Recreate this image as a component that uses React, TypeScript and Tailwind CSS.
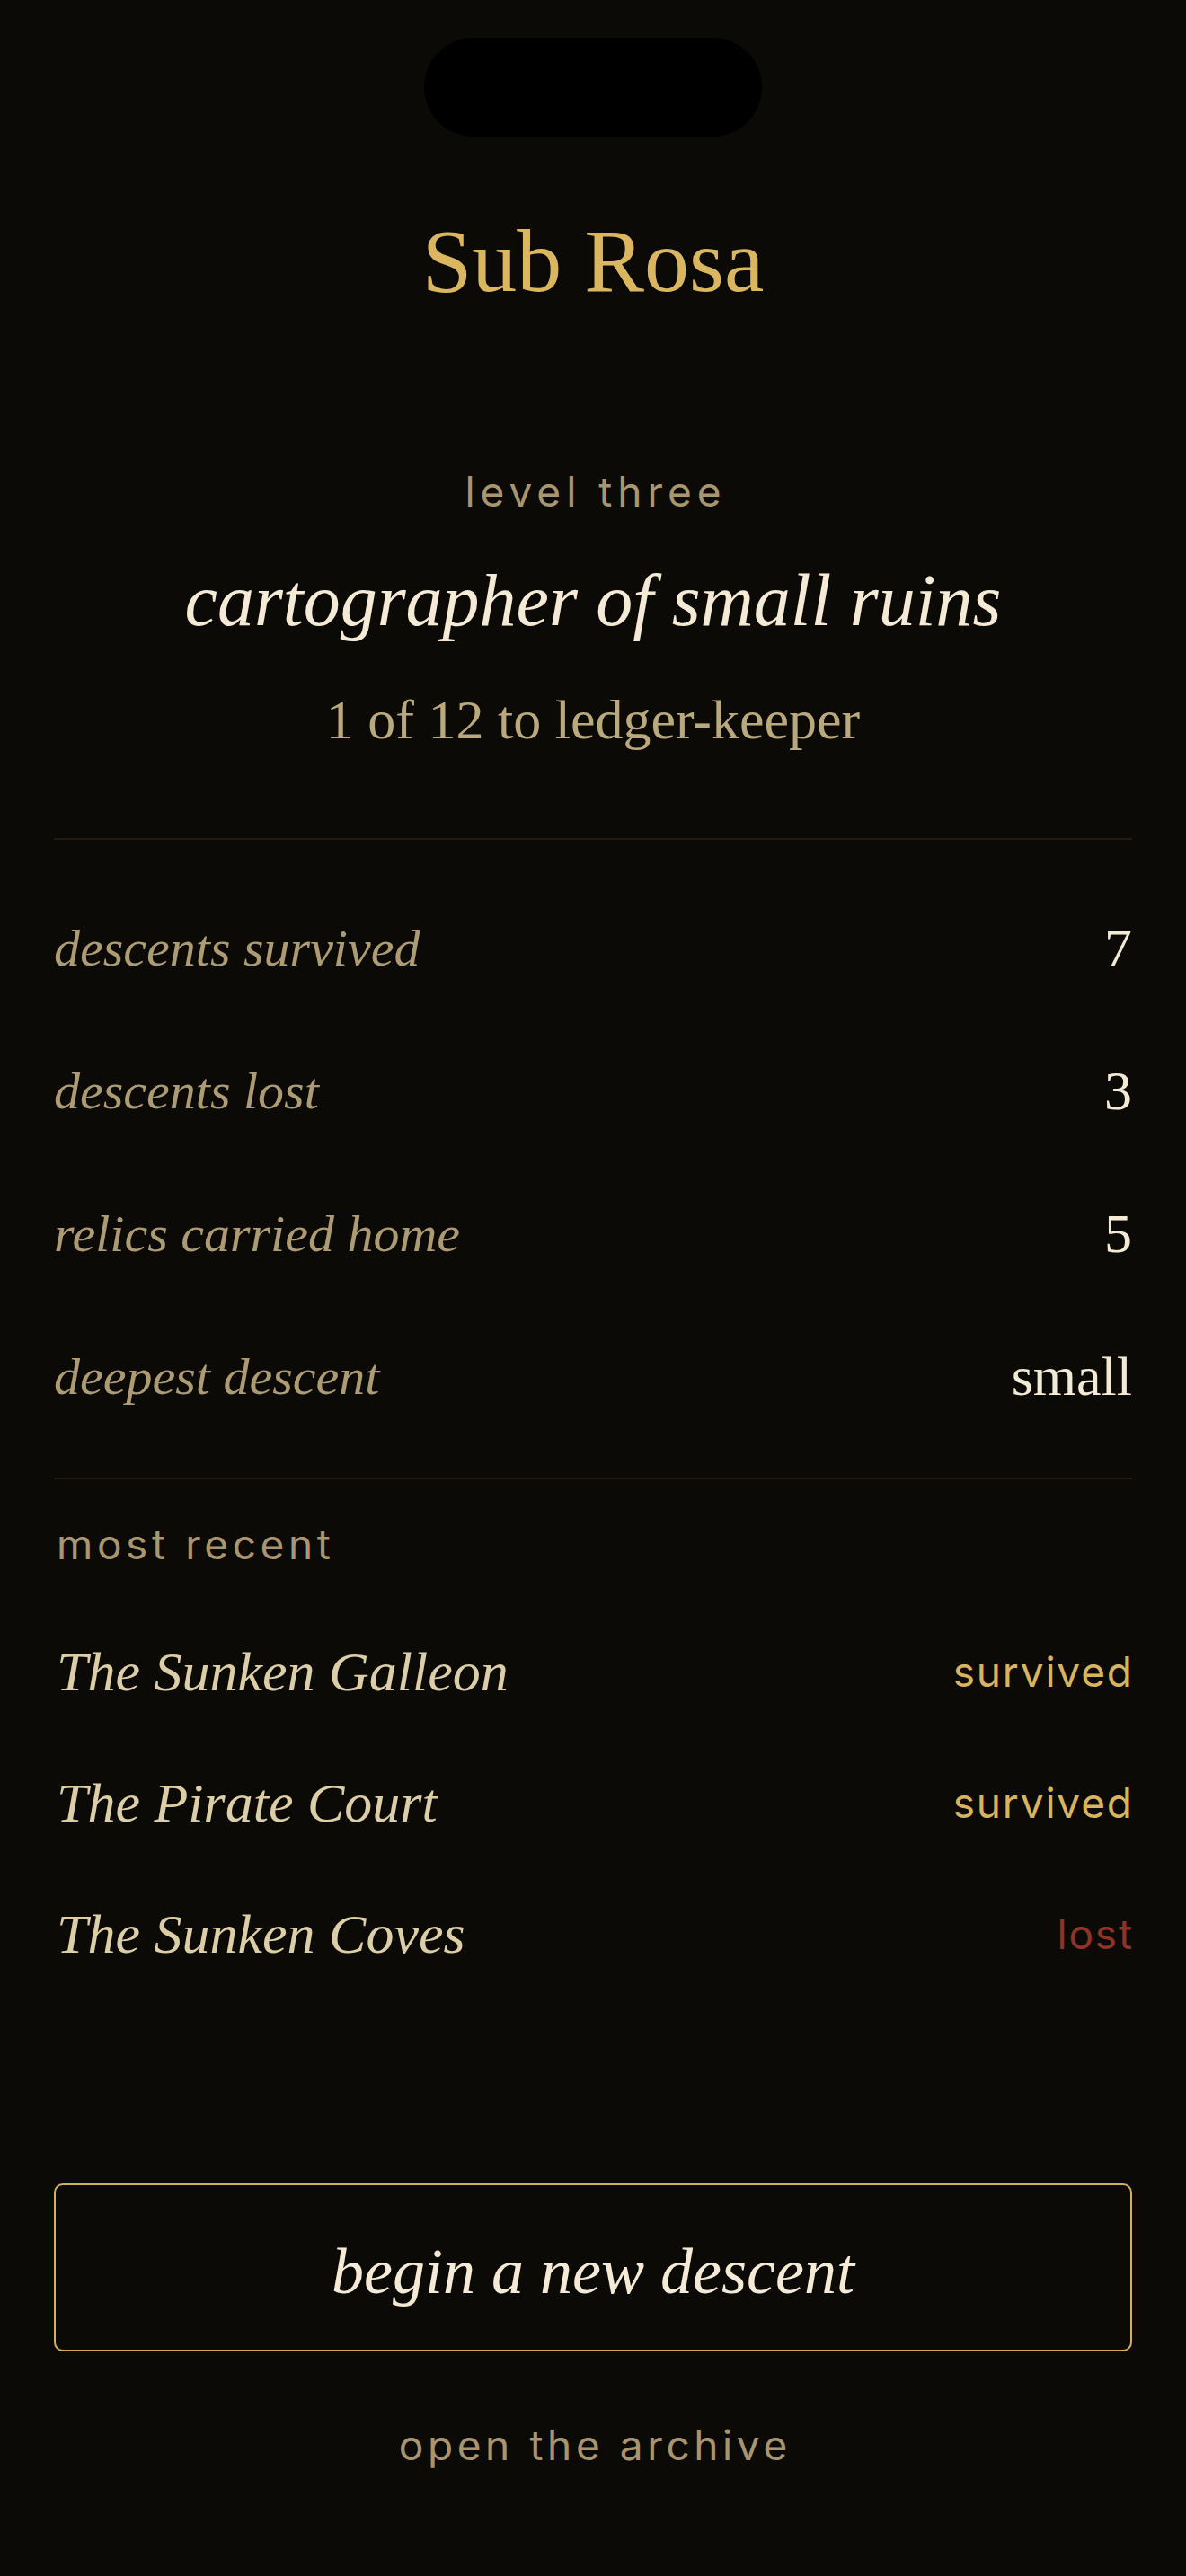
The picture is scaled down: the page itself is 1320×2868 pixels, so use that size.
import React from "react";

const serif = "font-['Liberation_Serif','Times_New_Roman',serif]";
const sans = "font-['Inter','Liberation_Sans',sans-serif]";

const stats = [
  { label: "descents survived", value: "7" },
  { label: "descents lost", value: "3" },
  { label: "relics carried home", value: "5" },
  { label: "deepest descent", value: "small" },
];

const recent = [
  { title: "The Sunken Galleon", outcome: "survived" },
  { title: "The Pirate Court", outcome: "survived" },
  { title: "The Sunken Coves", outcome: "lost" },
];

function Divider() {
  return <div className="h-[2px] w-full bg-[#211a11]" />;
}

export default function App() {
  return (
    <div className="min-h-[2868px] w-full bg-[#0c0a06] px-[60px] antialiased">
      <div className="flex justify-center pt-[42px]">
        <div className="h-[110px] w-[376px] rounded-full bg-black" />
      </div>

      <h1
        className={`${serif} mt-[89px] text-center text-[100px] leading-[100px] text-[#d9b65f]`}
      >
        Sub Rosa
      </h1>

      <div className="mt-[183px] flex flex-col items-center text-center">
        <div
          className={`${sans} pl-[0.13em] text-[46px] leading-[46px] tracking-[0.13em] text-[#a89670]`}
        >
          level three
        </div>
        <div
          className={`${serif} mt-[58px] text-[82px] italic leading-[82px] text-[#f4ead5]`}
        >
          cartographer of small ruins
        </div>
        <div
          className={`${serif} mt-[60px] text-[62px] leading-[62px] text-[#bba97e]`}
        >
          1 of 12 to ledger-keeper
        </div>
      </div>

      <div className="mt-[101px]">
        <Divider />
      </div>

      <div className="pt-[41px] pb-[33px]">
        {stats.map((s) => (
          <div key={s.label} className="flex h-[159px] items-center justify-between">
            <span
              className={`${serif} text-[58px] italic leading-[159px] text-[#ad9b73]`}
            >
              {s.label}
            </span>
            <span className={`${serif} text-[62px] leading-[159px] text-[#f3ead6]`}>
              {s.value}
            </span>
          </div>
        ))}
      </div>

      <Divider />

      <div className="pl-[3px]">
        <div
          className={`${sans} mt-[49px] text-[46px] leading-[46px] tracking-[0.1em] text-[#a89670]`}
        >
          most recent
        </div>
        <div className="mt-[46px]">
          {recent.map((r) => (
            <div key={r.title} className="flex h-[146px] items-center justify-between">
              <span
                className={`${serif} text-[62px] italic leading-[146px] text-[#dccfa8]`}
              >
                {r.title}
              </span>
              <span
                className={`${sans} -mr-[0.04em] text-[46px] leading-[146px] tracking-[0.04em] ${
                  r.outcome === "lost" ? "text-[#8e3426]" : "text-[#d9b45e]"
                }`}
              >
                {r.outcome}
              </span>
            </div>
          ))}
        </div>
      </div>

      <button
        className={`${serif} mt-[205px] flex h-[187px] w-full items-center justify-center rounded-[10px] border-2 border-[#d5b05a] pt-[8px] text-[72px] italic leading-[72px] text-[#f4ead5]`}
      >
        begin a new descent
      </button>

      <div
        className={`${sans} mt-[81px] pl-[0.1em] text-center text-[46px] leading-[46px] tracking-[0.1em] text-[#a89570]`}
      >
        open the archive
      </div>
    </div>
  );
}
